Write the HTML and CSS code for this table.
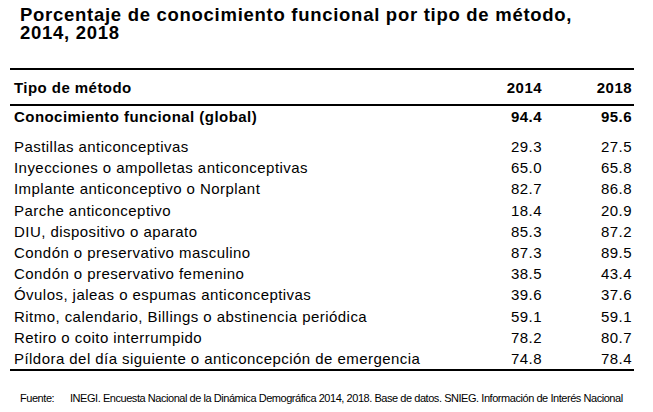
FILE: index.html
```html
<!DOCTYPE html>
<html lang="es">
<head>
<meta charset="utf-8">
<link rel="stylesheet" href="styles.css">
</head>
<body>
<div class="page">
  <h1 class="title">Porcentaje de conocimiento funcional por tipo de método,<br>2014, 2018</h1>
  <table class="data">
    <thead>
      <tr class="head"><th class="label">Tipo de método</th><th class="num">2014</th><th class="num">2018</th></tr>
    </thead>
    <tbody>
      <tr class="total"><td class="label">Conocimiento funcional (global)</td><td class="num">94.4</td><td class="num">95.6</td></tr>
      <tr class="first"><td class="label">Pastillas anticonceptivas</td><td class="num">29.3</td><td class="num">27.5</td></tr>
      <tr><td class="label">Inyecciones o ampolletas anticonceptivas</td><td class="num">65.0</td><td class="num">65.8</td></tr>
      <tr><td class="label">Implante anticonceptivo o Norplant</td><td class="num">82.7</td><td class="num">86.8</td></tr>
      <tr><td class="label">Parche anticonceptivo</td><td class="num">18.4</td><td class="num">20.9</td></tr>
      <tr><td class="label">DIU, dispositivo o aparato</td><td class="num">85.3</td><td class="num">87.2</td></tr>
      <tr><td class="label">Condón o preservativo masculino</td><td class="num">87.3</td><td class="num">89.5</td></tr>
      <tr><td class="label">Condón o preservativo femenino</td><td class="num">38.5</td><td class="num">43.4</td></tr>
      <tr><td class="label">Óvulos, jaleas o espumas anticonceptivas</td><td class="num">39.6</td><td class="num">37.6</td></tr>
      <tr><td class="label">Ritmo, calendario, Billings o abstinencia periódica</td><td class="num">59.1</td><td class="num">59.1</td></tr>
      <tr><td class="label">Retiro o coito interrumpido</td><td class="num">78.2</td><td class="num">80.7</td></tr>
      <tr class="last"><td class="label">Píldora del día siguiente o anticoncepción de emergencia</td><td class="num">74.8</td><td class="num">78.4</td></tr>
    </tbody>
  </table>
  <p class="source"><span class="src-label">Fuente:</span><span class="src-text">INEGI. Encuesta Nacional de la Dinámica Demográfica 2014, 2018. Base de datos. SNIEG. Información de Interés Nacional</span></p>
</div>
</body>
</html>
```

FILE: styles.css
```css
html, body {
  margin: 0;
  padding: 0;
  background: #fff;
}
body {
  font-family: "Liberation Sans", Arial, sans-serif;
  color: #000;
}
.page {
  padding: 6px 0 0 10px;
  width: 624px;
}
.title {
  margin: 0 0 0 10px;
  font-size: 18.5px;
  line-height: 18px;
  letter-spacing: 0.72px;
  font-weight: bold;
}
.data {
  margin-top: 26px;
  width: 624px;
  border-collapse: collapse;
  font-size: 15px;
  letter-spacing: 0.45px;
}
.data th, .data td {
  padding: 0;
}
.data .label {
  text-align: left;
  padding-left: 4px;
}
.data .num {
  text-align: right;
}
.data th.num:nth-child(2), .data td.num:nth-child(2) {
  width: 90px;
}
.data th.num:nth-child(3), .data td.num:nth-child(3) {
  width: 90px;
  padding-right: 2px;
}
.head th {
  border-top: 2px solid #000;
  border-bottom: 2px solid #000;
  height: 34px;
  font-weight: bold;
  vertical-align: middle;
}
tbody tr td {
  height: 21.2px;
}
.total td {
  font-weight: bold;
  height: 20px;
  vertical-align: middle;
}
.first td {
  padding-top: 10px;
}
.last td {
  border-bottom: 2px solid #000;
}
.source {
  margin: 21px 0 0 10px;
  font-size: 11px;
  line-height: 12px;
  letter-spacing: -0.45px;
  display: flex;
  white-space: nowrap;
}
.src-label {
  width: 50px;
  flex: none;
}
```
